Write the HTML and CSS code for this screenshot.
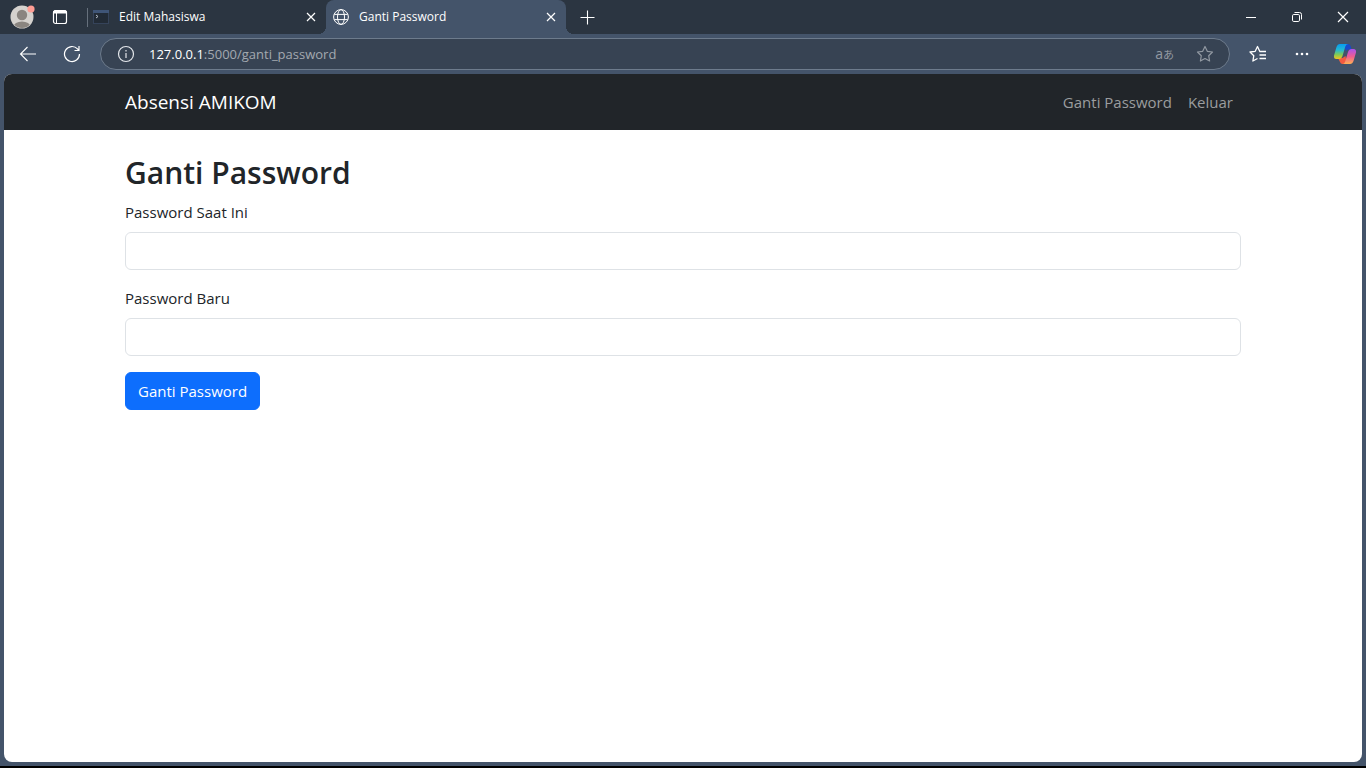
FILE: index.html
```html
<!DOCTYPE html>
<html lang="id">
<head>
<meta charset="utf-8">
<meta name="viewport" content="width=device-width, initial-scale=1">
<title>Ganti Password</title>
<link rel="stylesheet" href="styles.css">
</head>
<body>
<header class="titlebar">
  <button class="icon-btn profile" aria-label="Profil">
    <svg width="26" height="26" viewBox="0 0 26 26"><defs><clipPath id="face"><circle cx="12" cy="13" r="11"/></clipPath></defs><circle cx="12" cy="13" r="11.5" fill="#d5d2ce"/><g fill="#8a8580" clip-path="url(#face)"><circle cx="12" cy="11" r="5.2"/><ellipse cx="12" cy="23" rx="8.5" ry="5.5"/></g><circle cx="21" cy="5" r="3.6" fill="#ff9d94"/></svg>
  </button>
  <button class="icon-btn workspace" aria-label="Menu tab">
    <svg width="16" height="16" viewBox="0 0 16 16"><rect x="1.5" y="1.5" width="13" height="13" rx="2" fill="none" stroke="#fff" stroke-width="1.2"/><path d="M1.5 3.5a2 2 0 0 1 2-2h9a2 2 0 0 1 2 2V4h-13z" fill="#fff" stroke="#fff"/><path d="M4.500 4v10" stroke="#fff"/></svg>
  </button>
  <div class="tab">
    <svg class="favicon" width="16" height="16" viewBox="0 0 16 16"><rect x="0" y="1" width="16" height="14" fill="#35435a"/><rect x="1" y="4" width="14" height="10" fill="#222b36"/><path d="M0 1h16v3H0z" fill="#3f5577"/><path d="M3 6l2 1.5L3 9" fill="none" stroke="#b5bdc8"/></svg>
    <span class="tab-title">Edit Mahasiswa</span>
    <button class="icon-btn tab-close" aria-label="Tutup tab"><svg width="10" height="10" viewBox="0 0 10 10"><path d="M1 1l8 8M9 1L1 9" stroke="#fff" stroke-width="1.2"/></svg></button>
  </div>
  <div class="tab active">
    <svg class="favicon" width="16" height="16" viewBox="0 0 16 16" fill="none" stroke="#fff"><circle cx="8" cy="8" r="7.4"/><ellipse cx="8" cy="8" rx="3.5" ry="7.4"/><path d="M1.3 5.4h13.4M1.3 10.6h13.4"/></svg>
    <span class="tab-title">Ganti Password</span>
    <button class="icon-btn tab-close" aria-label="Tutup tab"><svg width="10" height="10" viewBox="0 0 10 10"><path d="M1 1l8 8M9 1L1 9" stroke="#fff" stroke-width="1.2"/></svg></button>
  </div>
  <button class="icon-btn new-tab" aria-label="Tab baru"><svg width="15" height="15" viewBox="0 0 15 15"><path d="M7.5 .5v14M.5 7.5h14" stroke="#fff" stroke-width="1.1"/></svg></button>
  <div class="window-controls">
    <button class="icon-btn" aria-label="Kecilkan"><svg width="12" height="12" viewBox="0 0 12 12"><path d="M1 6.5h10" stroke="#fff"/></svg></button>
    <button class="icon-btn" aria-label="Pulihkan"><svg width="12" height="12" viewBox="0 0 12 12" fill="none" stroke="#fff"><rect x="1.5" y="3.5" width="7" height="7" rx="1.3"/><path d="M3.5 1.5h5a2 2 0 0 1 2 2v5"/></svg></button>
    <button class="icon-btn" aria-label="Tutup"><svg width="12" height="12" viewBox="0 0 12 12"><path d="M1 1l10 10M11 1L1 11" stroke="#fff" stroke-width="1.2"/></svg></button>
  </div>
</header>

<div class="toolbar">
  <button class="icon-btn" aria-label="Kembali"><svg width="18" height="18" viewBox="0 0 18 18" fill="none" stroke="#fff" stroke-width="1.1"><path d="M17 9H1.5M8.500 2L1.500 9l7 7"/></svg></button>
  <button class="icon-btn" aria-label="Muat ulang"><svg width="18" height="18" viewBox="0 0 18 18" fill="none" stroke="#fff" stroke-width="1.2"><path d="M16.500 9A7.500 7.500 0 1 1 14.500 3.900L16 5.500M16 1v4.500h-4.500"/></svg></button>
  <div class="address">
    <svg width="18" height="18" viewBox="0 0 18 18" fill="none" stroke="#e4e7eb"><circle cx="9" cy="9" r="7.500" stroke-width="1.200"/><path d="M9 8v5M9 5v1.500" stroke-width="1.200"/></svg>
    <span class="url"><span class="host">127.0.0.1</span>:5000/ganti_password</span>
    <span class="translate">a<span class="kana">あ</span></span>
    <button class="icon-btn favorite" aria-label="Tambahkan ke favorit"><svg width="18" height="18" viewBox="0 0 18 18" fill="none" stroke="#9299a2" stroke-width="1.200" stroke-linejoin="round"><path d="M9 1.500l2.300 4.800 5.200.700-3.800 3.700.900 5.300L9 13.500 4.400 16l.900-5.300L1.500 7l5.200-.7z"/></svg></button>
  </div>
  <div class="tools">
    <button class="icon-btn" aria-label="Favorit"><svg width="18" height="18" viewBox="0 0 18 18" fill="none" stroke="#fff" stroke-width="1.300" stroke-linejoin="round"><path d="M12 6.500l-1.300-.2L8.500 1.500 6.200 6.300 1 7l3.800 3.700-.9 5.300 4.600-2.500M10.500 6.500H17M10.500 10H17M10.500 13.500H17"/></svg></button>
    <button class="icon-btn" aria-label="Lainnya"><svg width="14" height="4" viewBox="0 0 14 4" fill="#fff"><circle cx="2" cy="2" r="1.300"/><circle cx="7" cy="2" r="1.300"/><circle cx="12" cy="2" r="1.300"/></svg></button>
    <button class="icon-btn copilot" aria-label="Copilot">
      <svg width="24" height="24" viewBox="0 0 24 24"><defs><linearGradient id="cool" x1="0" y1="0" x2="0" y2="1"><stop offset="0" stop-color="#079bf0"/><stop offset=".4" stop-color="#24b9d2"/><stop offset=".7" stop-color="#80cb57"/><stop offset="1" stop-color="#f2c51d"/></linearGradient><linearGradient id="warm" x1="0" y1="0" x2="0" y2="1"><stop offset="0" stop-color="#a952ed"/><stop offset=".5" stop-color="#ef5d91"/><stop offset="1" stop-color="#ffb052"/></linearGradient></defs><path d="M11 2h4q2 0 2.600 2l1 3.500h-3q-2 0-2.700 2z" fill="#1849ca"/><path d="M5 16h4.500l3-2 1.500 8H9.500q-2 0-2.500-2z" fill="#f45b40"/><path d="M7 2h8q-2 0-2.700 2.500L9.500 14q-1 3-3.500 3H3.500Q.5 17 1 13.500L3.500 5Q4.500 2 7 2z" fill="url(#cool)"/><path d="M17 22H9.500q2 0 2.700-2.500L15 10q1-3 3.500-3h2q3 0 2.500 3.500L20.500 19q-1 3-3.500 3z" fill="url(#warm)"/></svg>
    </button>
  </div>
</div>

<div class="page">
  <nav class="navbar">
    <div class="container nav-row">
      <a class="brand" href="#">Absensi AMIKOM</a>
      <div class="nav-links">
        <a href="#">Ganti Password</a>
        <a href="#">Keluar</a>
      </div>
    </div>
  </nav>
  <main class="container content">
    <h2 class="heading">Ganti Password</h2>
    <form>
      <div class="field">
        <label for="current">Password Saat Ini</label>
        <input type="password" id="current">
      </div>
      <div class="field">
        <label for="new">Password Baru</label>
        <input type="password" id="new">
      </div>
      <button class="submit" type="submit">Ganti Password</button>
    </form>
  </main>
</div>
</body>
</html>
```
FILE: styles.css
```css
* { box-sizing: border-box; }

body {
  margin: 0;
  min-height: 100vh;
  display: flex;
  flex-direction: column;
  background: #44546a;
  border-bottom: 2px solid #000;
  font-family: "Segoe UI", "Open Sans", sans-serif;
  font-size: 15px;
  line-height: 24px;
  color: #212529;
}

a { text-decoration: none; }
svg { display: block; flex: none; }

.icon-btn {
  display: flex;
  align-items: center;
  justify-content: center;
  flex: none;
  padding: 0;
  border: 0;
  background: none;
}

.titlebar {
  display: flex;
  height: 34px;
  background: #2b3541;
}
.profile { width: 46px; }
.workspace { width: 28px; }

.tab {
  display: flex;
  align-items: center;
  width: 240px;
  padding: 0 5px 0 7px;
  color: #fff;
  font-size: 12px;
}
.tab:not(.active) {
  margin-left: 12px;
  background: linear-gradient(#66707c, #66707c) 1px 8px / 1px 19px no-repeat;
}
.tab.active {
  position: relative;
  border-radius: 8px 8px 0 0;
  background: #44546a;
}
.tab.active::before,
.tab.active::after {
  content: "";
  position: absolute;
  bottom: 0;
  width: 8px;
  height: 8px;
}
.tab.active::before {
  right: 100%;
  background: radial-gradient(circle at 0 0, transparent 8px, #44546a 8px);
}
.tab.active::after {
  left: 100%;
  background: radial-gradient(circle at 100% 0, transparent 8px, #44546a 8px);
}
.tab-title { flex: 1; margin-left: 10px; }
.tab-close { width: 20px; height: 20px; }
.new-tab { width: 43px; }

.window-controls { display: flex; margin-left: auto; }
.window-controls .icon-btn { width: 46px; }

.toolbar {
  display: flex;
  align-items: center;
  height: 40px;
  padding: 0 0 0 6px;
}
.toolbar > .icon-btn { width: 44px; }
.address {
  display: flex;
  flex: 1;
  align-items: center;
  height: 32px;
  margin-left: 6px;
  padding: 0 15px 0 16px;
  border: 1px solid #6d7b8c;
  border-radius: 16px;
  background: #374353;
}
.url {
  flex: 1;
  margin-left: 14px;
  color: #a3a9b0;
  font-size: 13px;
}
.host { color: #fff; }
.translate {
  display: flex;
  align-items: center;
  color: #9299a2;
  font-size: 14px;
}
.kana { font-family: "Noto Sans CJK JP", sans-serif; font-size: 11px; }
.favorite { margin-left: 22px; }
.tools { display: flex; margin-left: 6px; }
.tools .icon-btn { width: 44px; }
.tools .copilot { width: 42px; }

.page {
  flex: 1;
  margin: 0 4px 4px;
  overflow: hidden;
  border-radius: 8px;
  background: #fff;
}
.container {
  width: 100%;
  max-width: 1140px;
  margin: 0 auto;
  padding: 0 12px;
}
.navbar { background: #212529; }
.nav-row {
  display: flex;
  align-items: center;
  justify-content: space-between;
  min-height: 56px;
}
.brand { color: #fff; font-size: 19px; }
.nav-links { display: flex; gap: 16px; padding-right: 8px; }
.nav-links a { color: #9b9d9f; }

.content { padding-top: 24px; }
.heading {
  margin: 0 0 8px;
  font-size: 30px;
  font-weight: 600;
  line-height: 38px;
}
.field { margin-bottom: 16px; }
.field label { display: block; margin-bottom: 8px; }
.field input {
  display: block;
  width: 100%;
  height: 38px;
  padding: 6px 12px;
  border: 1px solid #dee2e6;
  border-radius: 6px;
  background: #fff;
  font: inherit;
}
.submit {
  height: 38px;
  padding: 6px 12px;
  border: 1px solid #0d6efd;
  border-radius: 6px;
  background: #0d6efd;
  color: #fff;
  font: inherit;
}
```
